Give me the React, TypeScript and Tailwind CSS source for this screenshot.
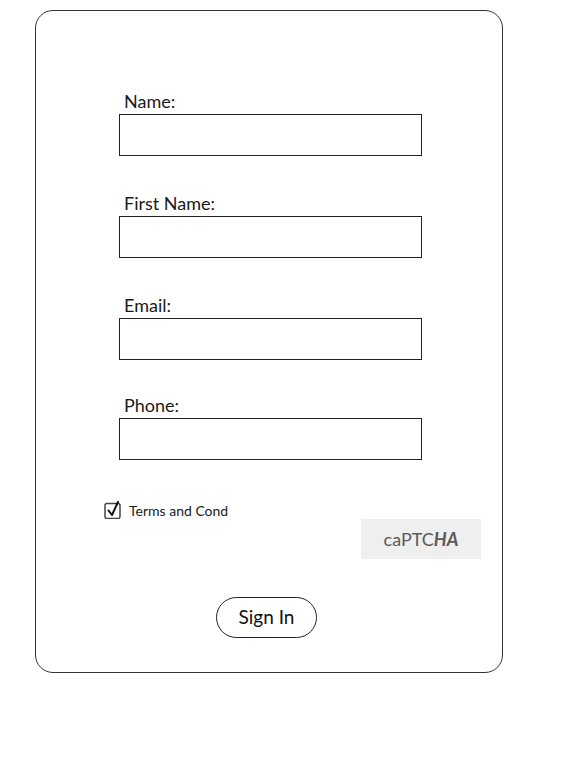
import React from "react";

const font = { fontFamily: '"Source Sans Pro", Lato, "Noto Sans", sans-serif' };

function Field({ label }: { label: string }) {
  return (
    <div className="flex flex-col">
      <div className="pl-[5px] h-[24px] text-[18px] leading-[24px] text-[#1a1a1a]">{label}</div>
      <div className="mt-[1px] w-[303px] h-[42px] border border-[#222] bg-white" />
    </div>
  );
}

export default function App() {
  return (
    <div className="w-[567px] h-[772px] bg-white" style={font}>
      <div className="pt-[10px] pl-[35px]">
        <div className="w-[468px] h-[663px] border border-[#333] rounded-[18px] flex flex-col">
          <div className="pl-[83px] pt-[78px] flex flex-col gap-[35px]">
            <Field label="Name:" />
            <Field label="First Name:" />
            <Field label="Email:" />
            <div className="mt-[-2px]">
              <Field label="Phone:" />
            </div>
          </div>
          <div className="mt-[40px] pl-[68px] flex items-center h-[20px]">
            <svg width="18" height="18" viewBox="0 0 18 18" className="shrink-0">
              <rect x="1" y="2.5" width="15" height="15" rx="2" fill="none" stroke="#444" strokeWidth="1.5" />
              <path d="M4.5 9.5 L8 14 L14 1" fill="none" stroke="#111" strokeWidth="2" strokeLinecap="round" strokeLinejoin="round" />
            </svg>
            <span className="ml-[7px] text-[14px] text-[#1a1a1a]">Terms and Cond</span>
          </div>
          <div className="flex justify-end pr-[21px] mt-[-1px]">
            <div className="w-[120px] h-[40px] bg-[#efefef] flex items-center justify-center text-[18px] text-[#5a5a5a]">
              caPTC<span className="italic font-bold">HA</span>
            </div>
          </div>
          <div className="flex mt-[38px] pl-[180px]">
            <div className="w-[101px] h-[41px] border border-[#222] rounded-full flex items-center justify-center text-[19px] text-[#111]">
              Sign In
            </div>
          </div>
        </div>
      </div>
    </div>
  );
}
